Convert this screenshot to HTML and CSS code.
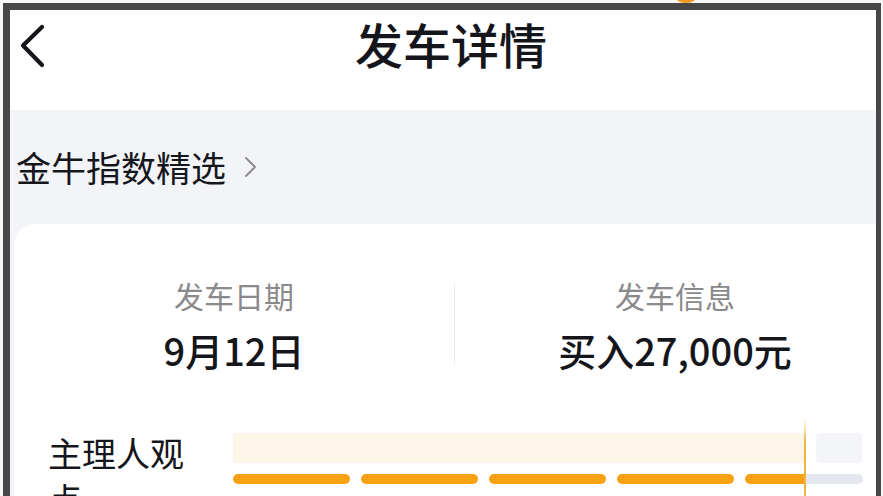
FILE: index.html
```html
<!DOCTYPE html>
<html lang="zh-CN">
<head>
<meta charset="utf-8">
<title>发车详情</title>
<link rel="stylesheet" href="styles.css">
</head>
<body>
<span class="top-dot"></span>
<div class="frame">
  <header class="header">
    <svg class="back" width="30" height="48" viewBox="0 0 30 48"><path d="M24 4 L5 22.5 L24 42" fill="none" stroke="#15161c" stroke-width="4.2" stroke-linecap="round" stroke-linejoin="round"/></svg>
    <h1 class="title">发车详情</h1>
  </header>
  <main class="section">
    <div class="crumb">
      <span class="crumb-text">金牛指数精选</span>
      <svg class="crumb-arrow" width="14" height="22" viewBox="0 0 14 22"><path d="M3 2 L12 11 L3 20" fill="none" stroke="#8a8a8a" stroke-width="1.8" stroke-linecap="round" stroke-linejoin="round"/></svg>
    </div>
    <section class="card">
      <div class="stats">
        <div class="stat">
          <div class="stat-label">发车日期</div>
          <div class="stat-value">9月12日</div>
        </div>
        <div class="divider"></div>
        <div class="stat">
          <div class="stat-label">发车信息</div>
          <div class="stat-value">买入27,000元</div>
        </div>
      </div>
      <div class="view">
        <div class="view-label">主理人观点</div>
        <div class="chart">
          <div class="chart-row">
            <div class="band band-cream"></div>
            <div class="band band-grey"></div>
          </div>
          <div class="chart-row bars">
            <span class="seg"></span>
            <span class="seg"></span>
            <span class="seg"></span>
            <span class="seg"></span>
            <span class="seg seg-last"></span>
            <span class="seg-grey"></span>
          </div>
          <span class="marker"></span>
        </div>
      </div>
    </section>
  </main>
</div>
</body>
</html>
```
FILE: styles.css
```css
* { box-sizing: border-box; }
html, body {
  margin: 0;
  padding: 0;
  background: #f7f7f7;
  height: 496px;
  overflow: hidden;
  font-family: "Noto Sans CJK SC", "Noto Sans", sans-serif;
}
.top-dot {
  position: absolute;
  left: 676px;
  top: -8px;
  width: 20px;
  height: 11px;
  border-radius: 50%;
  background: #f39a25;
}
.frame {
  margin: 3px 0 0 3px;
  width: 878px;
  height: 520px;
  border-top: 7px solid #474747;
  border-left: 7px solid #474747;
  border-right: 5px solid #474747;
  overflow: hidden;
  background: #f3f4f8;
}
.header {
  height: 100px;
  background: #ffffff;
  display: flex;
  align-items: center;
  justify-content: center;
  position: relative;
}
.back {
  position: absolute;
  left: 8px;
  top: 13px;
}
.title {
  margin: 0;
  font-size: 48px;
  font-weight: 500;
  color: #15161c;
  line-height: 60px;
  padding-left: 16px;
  transform: translateY(-17px);
}
.section {
  background: #f3f4f8;
}
.crumb {
  height: 114px;
  display: flex;
  align-items: center;
  padding-left: 6px;
  gap: 17px;
}
.crumb-text {
  font-size: 35px;
  color: #15161c;
  line-height: 44px;
}
.card {
  margin-left: 4px;
  width: 881px;
  background: #ffffff;
  border-radius: 22px 22px 0 0;
  padding-top: 51px;
}
.stats {
  display: flex;
  align-items: center;
}
.stat {
  flex: 1;
  display: flex;
  flex-direction: column;
  align-items: center;
}
.stat-label {
  font-size: 30px;
  line-height: 40px;
  color: #8a8a8c;
}
.stat-value {
  margin-top: 12px;
  font-size: 38px;
  line-height: 46px;
  font-weight: 500;
  color: #15161c;
}
.divider {
  width: 1px;
  height: 80px;
  background: #e9e9ec;
}
.view {
  display: flex;
  margin-top: 57px;
  padding-left: 34px;
}
.view-label {
  width: 185px;
  padding-right: 40px;
  font-size: 34px;
  line-height: 46px;
  color: #15161c;
  font-weight: 400;
}
.chart {
  position: relative;
  width: 630px;
  padding-top: 3px;
}
.chart-row {
  display: flex;
  gap: 11px;
}
.band {
  height: 30px;
}
.band-cream {
  width: 572px;
  background: #fdf5e7;
}
.band-grey {
  width: 46px;
  background: #f4f5f9;
  border-radius: 4px;
}
.bars {
  margin-top: 11px;
  gap: 11px;
}
.seg {
  width: 117px;
  height: 10px;
  border-radius: 5px;
  background: #f9a114;
}
.seg-last {
  width: 60px;
  border-radius: 5px 0 0 5px;
}
.seg-grey {
  width: 57px;
  height: 10px;
  margin-left: -10px;
  border-radius: 0 5px 5px 0;
  background: #e4e7ee;
}
.marker {
  position: absolute;
  left: 571px;
  top: -13px;
  width: 2px;
  height: 90px;
  background: linear-gradient(rgba(240, 180, 60, 0), #f0b43c 30%, #f0b43c);
}
```
